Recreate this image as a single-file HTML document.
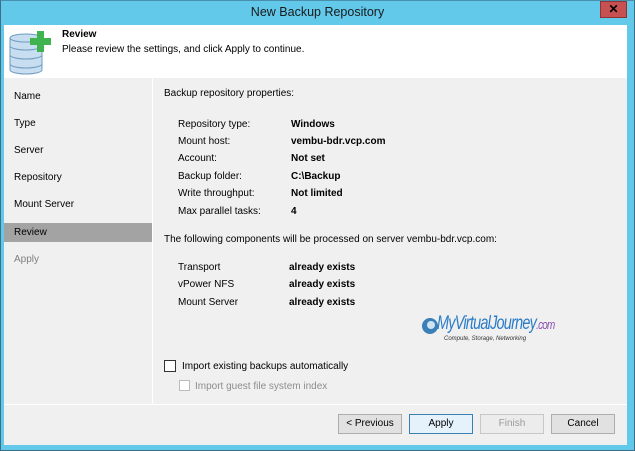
<!DOCTYPE html>
<html><head><style>
*{margin:0;padding:0;box-sizing:border-box}
body{width:635px;height:451px;background:#62c9ea;font-family:"Liberation Sans",sans-serif;font-size:10px;color:#000;position:relative;overflow:hidden}
.frame{position:absolute;left:0;top:0;width:635px;height:451px;border:1px solid #3a6f86;border-top-color:#4a8fae}
.title{position:absolute;left:0;top:5px;width:635px;text-align:center;font-size:12.5px;color:#1a1a1a}
.close{position:absolute;left:600px;top:1px;width:27px;height:17px;background:#c75050;border:1px solid #8a3535;color:#000;font-size:12px;font-weight:bold;text-align:center;line-height:15px}
.client{position:absolute;left:4px;top:25px;width:623px;height:420px;background:#f0f0f0}
.header{position:absolute;left:0;top:0;width:623px;height:53px;background:#fff}
.t{position:absolute;white-space:nowrap}
.nav{position:absolute;left:0;top:53px;width:148px;height:352px}
.vline{position:absolute;left:148px;top:53px;width:1px;height:327px;background:#fff}
.hline{position:absolute;left:0;top:379px;width:623px;height:1px;background:#fff}
.btn{position:absolute;top:389px;width:64px;height:20px;border:1px solid #adadad;background:#e1e1e1;text-align:center;line-height:18px}
.cb{position:absolute;width:11px;height:11px;border:1px solid #333;background:#fff}
b{font-weight:bold}
</style></head><body>
<div class="frame"></div>
<div class="title">New Backup Repository</div>
<div class="close">✕</div>
<div class="client">
 <div class="header">
  <svg style="position:absolute;left:5px;top:4px" width="46" height="46" viewBox="0 0 46 46">
   <g fill="#c7ddf0" stroke="#6f9ac0" stroke-width="1">
    <path d="M1 35v6c0 2 7 4 16 4s16-2 16-4v-6"/>
    <path d="M1 26v9c0 2 7 4 16 4s16-2 16-4v-9"/>
    <path d="M1 17v9c0 2 7 4 16 4s16-2 16-4v-9"/>
    <path d="M1 9v8c0 2 7 4 16 4s16-2 16-4V9"/>
    <ellipse cx="17" cy="9" rx="16" ry="4"/>
   </g>
   <path fill="#3fb34f" d="M28 2h7v7h7v7h-7v7h-7v-7h-7V9h7z"/>
  </svg>
  <div class="t" style="left:58px;top:4px;font-weight:bold">Review</div>
  <div class="t" style="left:58px;top:19px">Please review the settings, and click Apply to continue.</div>
 </div>
 <div class="nav">
  <div class="t" style="left:10px;top:13px">Name</div>
  <div class="t" style="left:10px;top:40px">Type</div>
  <div class="t" style="left:10px;top:67px">Server</div>
  <div class="t" style="left:10px;top:94px">Repository</div>
  <div class="t" style="left:10px;top:121px">Mount Server</div>
  <div style="position:absolute;left:0;top:145px;width:148px;height:19px;background:#a3a3a3"></div>
  <div class="t" style="left:10px;top:149px">Review</div>
  <div class="t" style="left:10px;top:176px;color:#808080">Apply</div>
 </div>
 <div class="vline"></div>
 <div class="hline"></div>
 <div class="t" style="left:160px;top:63px">Backup repository properties:</div>
 <div class="t" style="left:174px;top:94px">Repository type:</div><div class="t" style="left:287px;top:94px"><b>Windows</b></div>
 <div class="t" style="left:174px;top:111px">Mount host:</div><div class="t" style="left:287px;top:111px"><b>vembu-bdr.vcp.com</b></div>
 <div class="t" style="left:174px;top:128px">Account:</div><div class="t" style="left:287px;top:128px"><b>Not set</b></div>
 <div class="t" style="left:174px;top:146px">Backup folder:</div><div class="t" style="left:287px;top:146px"><b>C:\Backup</b></div>
 <div class="t" style="left:174px;top:163px">Write throughput:</div><div class="t" style="left:287px;top:163px"><b>Not limited</b></div>
 <div class="t" style="left:174px;top:181px">Max parallel tasks:</div><div class="t" style="left:287px;top:181px"><b>4</b></div>
 <div class="t" style="left:160px;top:209px">The following components will be processed on server vembu-bdr.vcp.com:</div>
 <div class="t" style="left:174px;top:237px">Transport</div><div class="t" style="left:285px;top:237px"><b>already exists</b></div>
 <div class="t" style="left:174px;top:254px">vPower NFS</div><div class="t" style="left:285px;top:254px"><b>already exists</b></div>
 <div class="t" style="left:174px;top:272px">Mount Server</div><div class="t" style="left:285px;top:272px"><b>already exists</b></div>
 <svg style="position:absolute;left:416px;top:290px" width="20" height="22"><circle cx="10" cy="11" r="8" fill="#3a7fb8"/><circle cx="11" cy="10" r="4" fill="#cfe4f3"/></svg>
 <div class="t" style="left:433px;top:288px;font-size:19px;font-style:italic;color:#2a7cc7;letter-spacing:-1px;transform:scaleX(0.76);transform-origin:left">MyVirtualJourney<span style="font-size:13px;color:#8a4fb0">.com</span></div>
 <div class="t" style="left:440px;top:311px;font-size:6px;font-style:italic;color:#333">Compute, Storage, Networking</div>
 <div class="cb" style="left:160px;top:335px;width:12px;height:12px"></div>
 <div class="t" style="left:178px;top:336px">Import existing backups automatically</div>
 <div class="cb" style="left:175px;top:355px;border-color:#bbb"></div>
 <div class="t" style="left:191px;top:356px;color:#8d8d8d">Import guest file system index</div>
 <div class="btn" style="left:334px">&lt; Previous</div>
 <div class="btn" style="left:405px;border-color:#3c7fb1;background:#e5f1fb">Apply</div>
 <div class="btn" style="left:476px;color:#9a9a9a;border-color:#c8c8c8;background:#ececec">Finish</div>
 <div class="btn" style="left:547px">Cancel</div>
</div>
</body></html>
